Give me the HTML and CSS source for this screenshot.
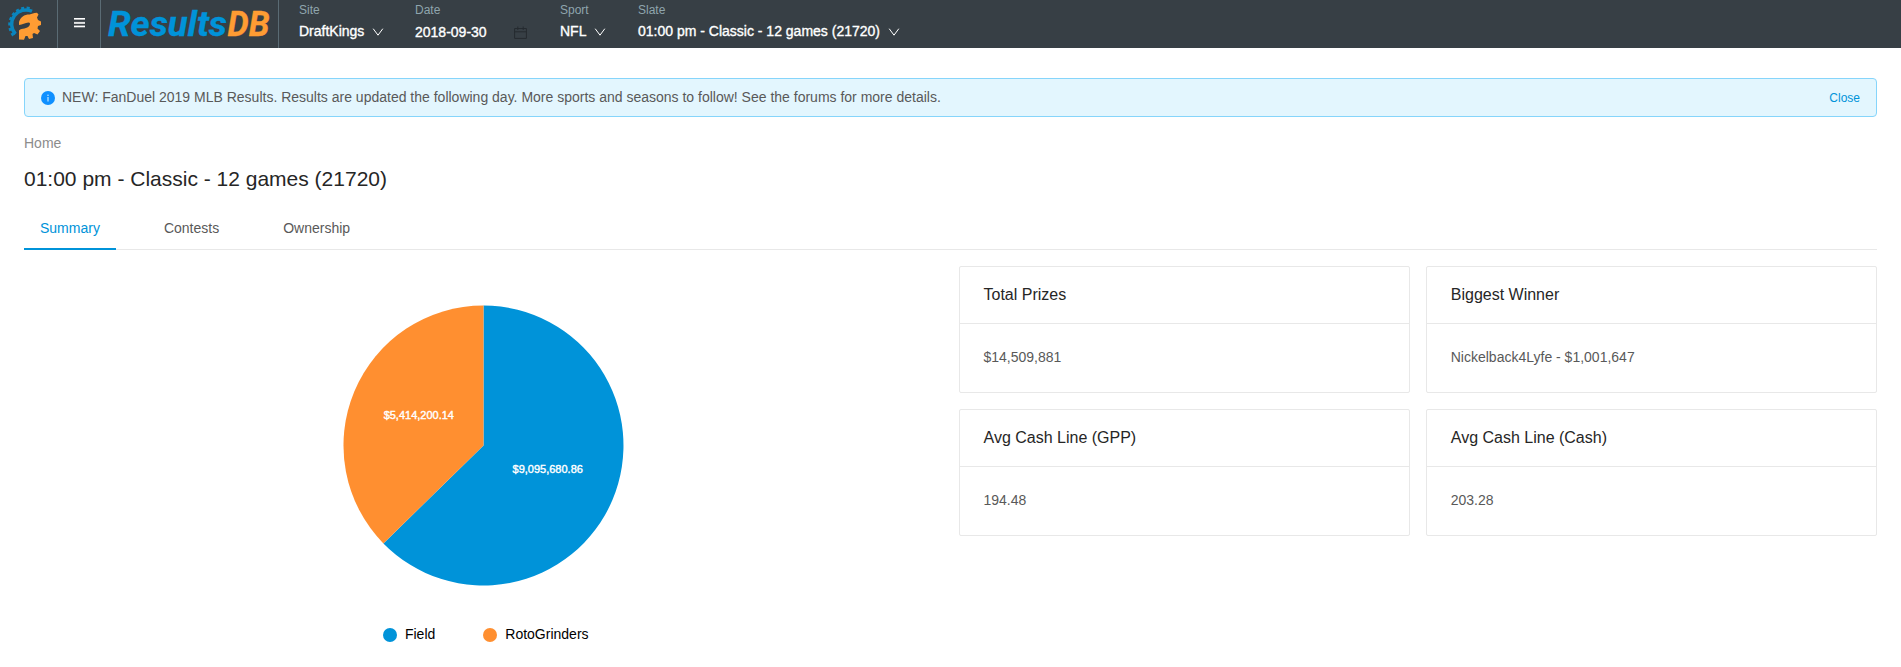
FILE: index.html
```html
<!DOCTYPE html>
<html lang="en">
<head>
<meta charset="utf-8">
<title>ResultsDB</title>
<link rel="stylesheet" href="styles.css">
</head>
<body>
<header class="topbar">
  <a class="brand">
    <svg width="48" height="48" viewBox="0 0 48 48">
      <path d="M13.500 35.500 A16.800 16.800 0 0 1 32 9" fill="none" stroke="#0a85bd" stroke-width="3" stroke-dasharray="3 2.400"/>
      <path d="M15.500 34 A14.300 14.300 0 0 1 32 11.300" fill="none" stroke="#0a85bd" stroke-width="3.400"/>
      <path d="M19 22 C20.500 17 24 14.500 29.500 14.500 L34.500 13 L37 12.800 L38.500 14.500 L37 17.500 L38 20 L41 21.500 L41 25 L38 26 L37.500 28.500 L40 31 L37.500 34.500 L34 33 L32.500 34 L33 38 L29 39 L27.500 36 L25.500 36 L24 39.800 L19 39.500 L19 30.500 C22 27.500 27 29.500 29.500 25.500 C30.500 23.500 30 22.500 28.500 22.500 C25 22.500 22.500 25 19 25 Z" fill="#ff9c33"/>
    </svg>
  </a>
  <button class="menu" aria-label="Menu">
    <svg width="11" height="10" viewBox="0 0 11 10" fill="#fff"><rect width="11" height="1.600"/><rect y="3.900" width="11" height="2" opacity=".85"/><rect y="7.600" width="11" height="1.700"/></svg>
  </button>
  <a class="wordmark">
    <svg width="177" height="48" viewBox="0 0 177 48">
      <text class="logo-text" x="7" y="35.700" textLength="119" lengthAdjust="spacingAndGlyphs" fill="#0093d9" stroke="#0093d9">Results</text>
      <text class="logo-text" x="126.500" y="35.700" textLength="42" lengthAdjust="spacingAndGlyphs" fill="#ff9c33" stroke="#ff9c33">DB</text>
    </svg>
  </a>
  <div class="filters">
    <div class="filter site"><label>Site</label><div class="value">DraftKings<svg class="chev" width="12" height="12" viewBox="0 0 12 12"><path d="M1.200 2.700 L6 9.200 L10.800 2.700"/></svg></div></div>
    <div class="filter date"><label>Date</label><div class="value">2018-09-30<svg class="cal" width="13" height="13" viewBox="0 0 13 13"><path d="M.6 2.500H12.400V12.400H.6Z M.6 5.800H12.400 M3.800 .5V4 M9.200 .5V4"/></svg></div></div>
    <div class="filter sport"><label>Sport</label><div class="value">NFL<svg class="chev" width="12" height="12" viewBox="0 0 12 12"><path d="M1.200 2.700 L6 9.200 L10.800 2.700"/></svg></div></div>
    <div class="filter"><label>Slate</label><div class="value slate">01:00 pm - Classic - 12 games (21720)<svg class="chev" width="12" height="12" viewBox="0 0 12 12"><path d="M1.200 2.700 L6 9.200 L10.800 2.700"/></svg></div></div>
  </div>
</header>
<main class="page">
  <div class="alert">
    <svg width="14" height="14" viewBox="0 0 14 14"><circle cx="7" cy="7" r="7" fill="#1090ff"/><path d="M7 6V10.500" stroke="#e3f6fe"/><circle cx="7" cy="4.200" r=".7" fill="#e3f6fe"/></svg>
    <span class="alert-message">NEW: FanDuel 2019 MLB Results. Results are updated the following day. More sports and seasons to follow! See the forums for more details.</span>
    <a class="alert-close">Close</a>
  </div>
  <nav class="breadcrumb">Home</nav>
  <h1 class="title">01:00 pm - Classic - 12 games (21720)</h1>
  <div class="tabs">
    <a class="tab active">Summary</a>
    <a class="tab">Contests</a>
    <a class="tab">Ownership</a>
  </div>
  <div class="content">
    <section class="chart">
      <svg class="pie" width="281" height="281" viewBox="-140.500 -140.500 281 281">
        <path d="M0 0 V-140 A140 140 0 1 1 -100.100 97.900 Z" fill="#0093d9"/>
        <path d="M0 0 L-100.100 97.900 A140 140 0 0 1 0 -140 Z" fill="#ff8f30"/>
        <text class="slice-label" x="64.200" y="27.600">$9,095,680.86</text>
        <text class="slice-label" x="-64.700" y="-26.600">$5,414,200.14</text>
      </svg>
      <div class="legend">
        <span class="legend-item"><i class="dot field"></i>Field</span>
        <span class="legend-item"><i class="dot roto"></i>RotoGrinders</span>
      </div>
    </section>
    <section class="cards">
      <article class="card"><h2>Total Prizes</h2><p>$14,509,881</p></article>
      <article class="card"><h2>Biggest Winner</h2><p>Nickelback4Lyfe - $1,001,647</p></article>
      <article class="card"><h2>Avg Cash Line (GPP)</h2><p>194.48</p></article>
      <article class="card"><h2>Avg Cash Line (Cash)</h2><p>203.28</p></article>
    </section>
  </div>
</main>
</body>
</html>
```
FILE: styles.css
```css
* { box-sizing: border-box; }
body {
  margin: 0;
  background: #fff;
  color: #595959;
  font: 14px/21px "Liberation Sans", Arial, sans-serif;
}
svg { display: block; flex: none; }

.topbar { display: flex; height: 48px; background: #373f45; }
.brand { width: 58px; border-right: 1px solid #5a6b74; }
.menu {
  display: flex; justify-content: center; align-items: flex-start;
  width: 43px; padding: 18px 0 0; border: 0; border-right: 1px solid #5a6b74;
  background: none;
}
.wordmark { width: 178px; border-right: 1px solid #5a6b74; }
.logo-text { font: italic bold 35px Roboto, "Liberation Sans", sans-serif; stroke-width: .4; }

.filters { display: flex; padding-left: 20px; }
.filter label { display: block; height: 19px; font-size: 12px; line-height: 20px; color: #8fa5ad; }
.value {
  display: flex; align-items: center; height: 25px; line-height: 25px;
  color: #fff; -webkit-text-stroke: .35px #fff;
}
.site { width: 116px; }
.date { width: 145px; }
.date .value { height: 26px; line-height: 26px; }
.sport { width: 78px; }
.chev { margin-left: 8px; fill: none; stroke: #fff; stroke-width: 1; }
.cal { margin-left: 27px; fill: none; stroke: #252b30; stroke-width: 1; }

.page { padding: 30px 24px 0; }
.alert {
  display: flex; align-items: center; height: 39px; padding: 0 16px;
  border: 1px solid #86d5fb; border-radius: 4px; background: #e3f6fe;
}
.alert-message { flex: 1; padding-left: 7px; }
.alert-close { padding-top: 1px; color: #0093d9; font-size: 12px; }
.breadcrumb { margin-top: 16px; color: #8c8c8c; }
.title { margin: 9px 0 0; color: #262626; font-size: 21px; line-height: 32px; font-weight: 400; }
.tabs { display: flex; gap: 32px; height: 42px; margin-top: 13px; border-bottom: 1px solid #e8e8e8; }
.tab { height: 42px; padding: 10px 16px 0; }
.tab.active { color: #0093d9; border-bottom: 2px solid #0093d9; }

.content { display: grid; grid-template-columns: 1fr 1fr; gap: 16px; padding-top: 16px; }
.chart { display: flex; flex-direction: column; align-items: center; padding: 39px 0 0 1px; }
.slice-label {
  fill: #fff; stroke: #fff; stroke-width: .4; font-size: 11px; text-anchor: middle;
}
.legend { display: flex; gap: 48px; margin-top: 38px; padding-left: 4px; color: #000; }
.legend-item { display: flex; align-items: center; gap: 8px; }
.dot { width: 14px; height: 14px; border-radius: 50%; }
.field { background: #0093d9; }
.roto { background: #ff8f30; }

.cards { display: grid; grid-template-columns: 1fr 1fr; gap: 16px; align-content: start; }
.card { height: 127px; border: 1px solid #e8e8e8; border-radius: 2px; }
.card h2 {
  height: 57px; margin: 0; padding: 16px 24px 0; border-bottom: 1px solid #e8e8e8;
  color: #262626; font-size: 16px; line-height: 24px; font-weight: 400;
}
.card p { margin: 0; padding: 23px 24px; }
```
